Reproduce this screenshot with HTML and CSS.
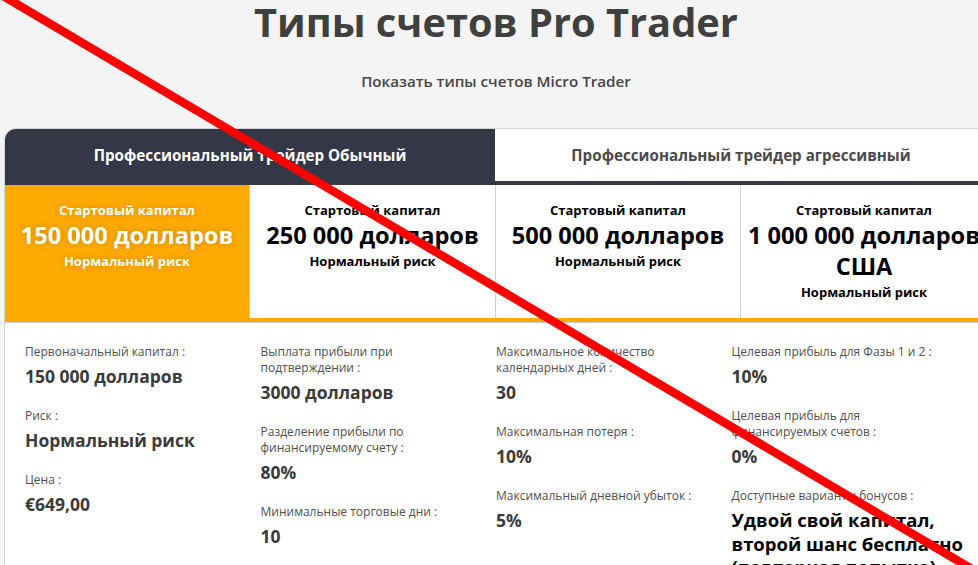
FILE: index.html
```html
<!DOCTYPE html>
<html lang="ru">
<head>
<meta charset="utf-8">
<title>Типы счетов Pro Trader</title>
<link rel="stylesheet" href="styles.css">
</head>
<body>
<div class="page">
  <header class="head">
    <h1 class="title">Типы счетов Pro Trader</h1>
    <p class="subtitle">Показать типы счетов Micro Trader</p>
  </header>

  <section class="card">
    <div class="tabs">
      <div class="tab tab-active">Профессиональный трейдер Обычный</div>
      <div class="tab">Профессиональный трейдер агрессивный</div>
    </div>

    <div class="plans">
      <div class="plan plan-active">
        <div class="plan-cap">Стартовый капитал</div>
        <div class="plan-amount">150 000 долларов</div>
        <div class="plan-risk">Нормальный риск</div>
      </div>
      <div class="plan">
        <div class="plan-cap">Стартовый капитал</div>
        <div class="plan-amount">250 000 долларов</div>
        <div class="plan-risk">Нормальный риск</div>
      </div>
      <div class="plan">
        <div class="plan-cap">Стартовый капитал</div>
        <div class="plan-amount">500 000 долларов</div>
        <div class="plan-risk">Нормальный риск</div>
      </div>
      <div class="plan">
        <div class="plan-cap">Стартовый капитал</div>
        <div class="plan-amount">1 000 000 долларов США</div>
        <div class="plan-risk">Нормальный риск</div>
      </div>
    </div>

    <div class="details">
      <div class="col">
        <div class="item"><div class="label">Первоначальный капитал :</div><div class="value">150 000 долларов</div></div>
        <div class="item"><div class="label">Риск :</div><div class="value">Нормальный риск</div></div>
        <div class="item"><div class="label">Цена :</div><div class="value">€649,00</div></div>
      </div>
      <div class="col">
        <div class="item"><div class="label">Выплата прибыли при подтверждении :</div><div class="value">3000 долларов</div></div>
        <div class="item"><div class="label">Разделение прибыли по финансируемому счету :</div><div class="value">80%</div></div>
        <div class="item"><div class="label">Минимальные торговые дни :</div><div class="value">10</div></div>
      </div>
      <div class="col">
        <div class="item"><div class="label">Максимальное количество календарных дней :</div><div class="value">30</div></div>
        <div class="item"><div class="label">Максимальная потеря :</div><div class="value">10%</div></div>
        <div class="item"><div class="label">Максимальный дневной убыток :</div><div class="value">5%</div></div>
      </div>
      <div class="col">
        <div class="item"><div class="label">Целевая прибыль для Фазы 1 и 2 :</div><div class="value">10%</div></div>
        <div class="item"><div class="label">Целевая прибыль для финансируемых счетов :</div><div class="value">0%</div></div>
        <div class="item"><div class="label">Доступные варианты бонусов :</div><div class="value value-bonus">Удвой свой капитал, второй шанс бесплатно (повторная попытка)</div></div>
      </div>
    </div>
  </section>
</div>

<svg class="cross" width="978" height="565" viewBox="0 0 978 565" aria-hidden="true">
  <line x1="-7" y1="-10" x2="982" y2="575" stroke="#ff0000" stroke-width="8.5"/>
</svg>
</body>
</html>
```

FILE: styles.css
```css
html, body {
  margin: 0;
  padding: 0;
}
body {
  background: #f4f4f4;
  font-family: "Open Sans", "Noto Sans", "DejaVu Sans", sans-serif;
  color: #444;
  width: 978px;
  height: 565px;
  overflow: hidden;
  position: relative;
}
.page {
  width: 984px;
  padding-left: 4px;
}
.head {
  text-align: center;
}
.title {
  margin: 0;
  font-size: 39.8px;
  line-height: 44px;
  font-weight: 700;
  color: #404040;
}
.subtitle {
  margin: 27px 0 0 0;
  font-size: 15.2px;
  line-height: 20px;
  font-weight: 600;
  color: #454545;
}
.card {
  margin-top: 37px;
  border: 1px solid #d4d4d4;
  border-top-left-radius: 12px;
  background: #fff;
  overflow: hidden;
}
.tabs {
  display: grid;
  grid-template-columns: 490px 1fr;
}
.tab {
  height: 52px;
  border-bottom: 4px solid #343746;
  display: flex;
  align-items: center;
  justify-content: center;
  font-size: 15.2px;
  font-weight: 700;
  color: #4a4a4a;
  background: #fff;
}
.tab-active {
  background: #343746;
  color: #fff;
}
.plans {
  display: grid;
  grid-template-columns: 244px 246px 245px 1fr;
  border-bottom: 4px solid #ffaa00;
}
.plan {
  height: 118px;
  padding-top: 15px;
  text-align: center;
  color: #000;
  font-weight: 700;
  border-left: 1px solid #cfcfcf;
}
.plan-active {
  border-left: 0;
  background: #ffaa00;
  color: #fff;
  text-shadow: 0 0 6px rgba(150, 90, 0, 0.45);
}
.plan-cap, .plan-risk {
  font-size: 13px;
  line-height: 20px;
}
.plan-amount {
  font-size: 23.6px;
  line-height: 31px;
}
.details {
  border-top: 1px solid #cacaca;
  display: grid;
  grid-template-columns: repeat(4, 235.5px);
  padding: 21px 0 0 20px;
  height: 300px;
}
.item {
  margin-bottom: 20px;
}
.label {
  max-width: 214px;
  font-size: 12px;
  line-height: 16px;
  color: #505050;
}
.value {
  margin-top: 4px;
  font-size: 17.5px;
  line-height: 24px;
  font-weight: 700;
  color: #3b3b3b;
}
.value-bonus {
  color: #000;
  font-size: 18.5px;
  line-height: 23.5px;
}
.cross {
  position: absolute;
  top: 0;
  left: 0;
  pointer-events: none;
}
```
